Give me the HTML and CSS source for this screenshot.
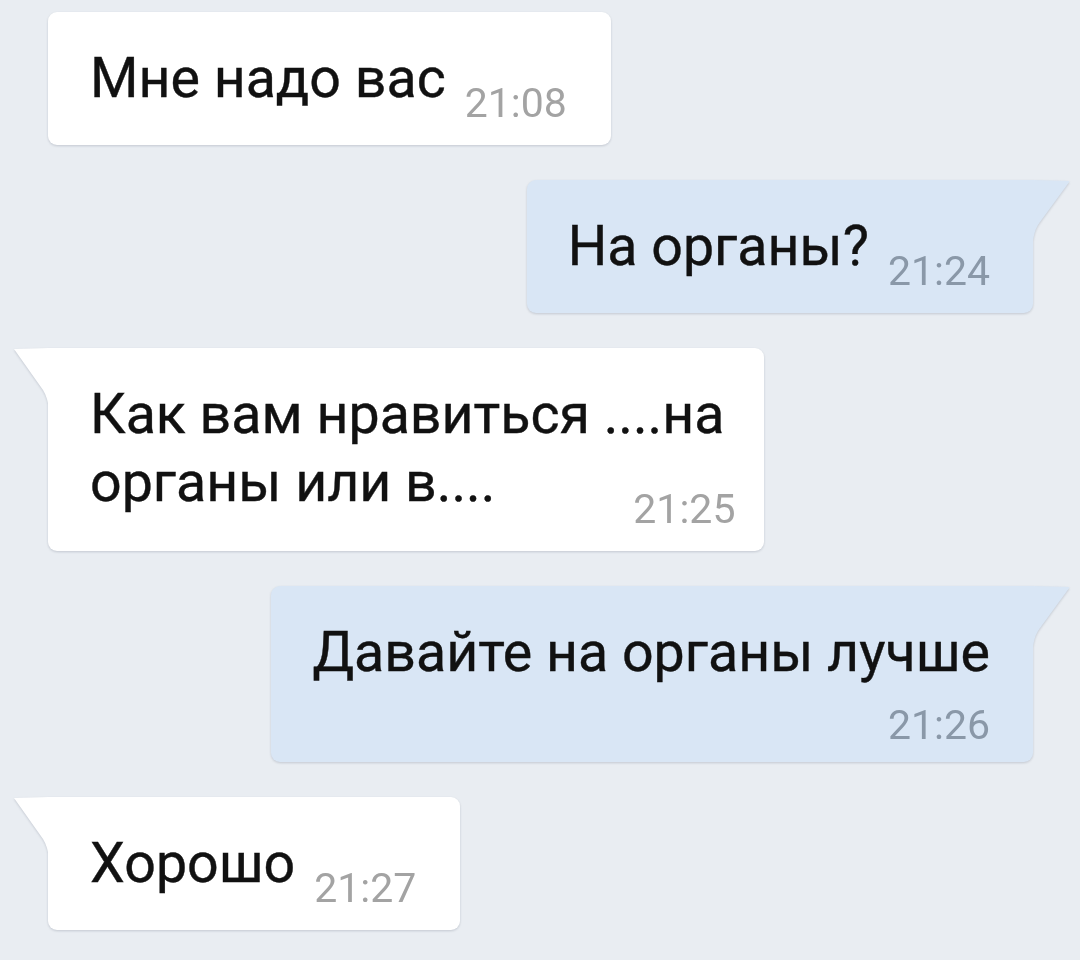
FILE: index.html
```html
<!DOCTYPE html>
<html lang="ru">
<head>
    <meta charset="UTF-8">
    <meta name="viewport" content="width=device-width, initial-scale=1.0">
    <title>Диалог</title>
    <link rel="stylesheet" href="styles.css">
</head>
<body>
    <div class="chat">
        <div class="msg in">
            <div class="bubble">
                Мне надо вас<span class="time">21:08</span>
            </div>
        </div>
        <div class="msg out">
            <div class="bubble tail">
                На органы?<span class="time">21:24</span>
            </div>
        </div>
        <div class="msg in">
            <div class="bubble tail multi">
                Как вам нравиться ....на<br>органы или в....<span class="time end">21:25</span>
            </div>
        </div>
        <div class="msg out">
            <div class="bubble tail">
                Давайте на органы лучше
                <span class="time below">21:26</span>
            </div>
        </div>
        <div class="msg in">
            <div class="bubble tail">
                Хорошо<span class="time">21:27</span>
            </div>
        </div>
    </div>
</body>
</html>
```

FILE: styles.css
```css
body {
    margin: 0;
    background-color: #e9edf2;
    font-family: Roboto, "Noto Sans", sans-serif;
    color: #111;
}
.chat {
    display: flex;
    flex-direction: column;
    gap: 35px;
    padding: 12px 47px 20px 48px;
}
.msg {
    display: flex;
}
.msg.out {
    justify-content: flex-end;
}
.bubble {
    position: relative;
    padding: 33px 44px 32px 42px;
    font-size: 55.5px;
    line-height: 68px;
    -webkit-text-stroke: 0.4px #111;
    border-radius: 9px;
    background-color: #fff;
    filter: drop-shadow(0 1.5px 1px rgba(60, 70, 90, 0.22));
}
.bubble.multi {
    padding-right: 40px;
}
.out .bubble {
    background-color: #d9e6f5;
    padding-right: 43px;
    padding-left: 41px;
}
.time {
    font-size: 41px;
    line-height: 0;
    vertical-align: -20px;
    margin-left: 19px;
    color: #a3a3a3;
    -webkit-text-stroke: 0;
}
.out .time {
    color: #8a98a8;
}
.time.end {
    float: right;
    line-height: 36px;
    margin-top: 42px;
    margin-right: -11px;
    margin-bottom: -8px;
}
.time.below {
    display: block;
    text-align: right;
    line-height: 40px;
    margin-top: 18px;
    margin-bottom: -15px;
}
/* bubble tails */
.bubble.tail::before {
    content: "";
    position: absolute;
    top: 0;
    width: 36px;
    height: 62px;
    background: inherit;
}
.in .bubble.tail {
    border-top-left-radius: 0;
}
.in .bubble.tail::before {
    left: -34px;
    clip-path: path('M0 1 L35 0 L35 62 Q34 50 29 42 Z');
}
.out .bubble.tail {
    border-top-right-radius: 0;
}
.out .bubble.tail::before {
    right: -36px;
    clip-path: path('M37 1 L0 0 L0 60 Q2 48 7 42 Z');
}
```
